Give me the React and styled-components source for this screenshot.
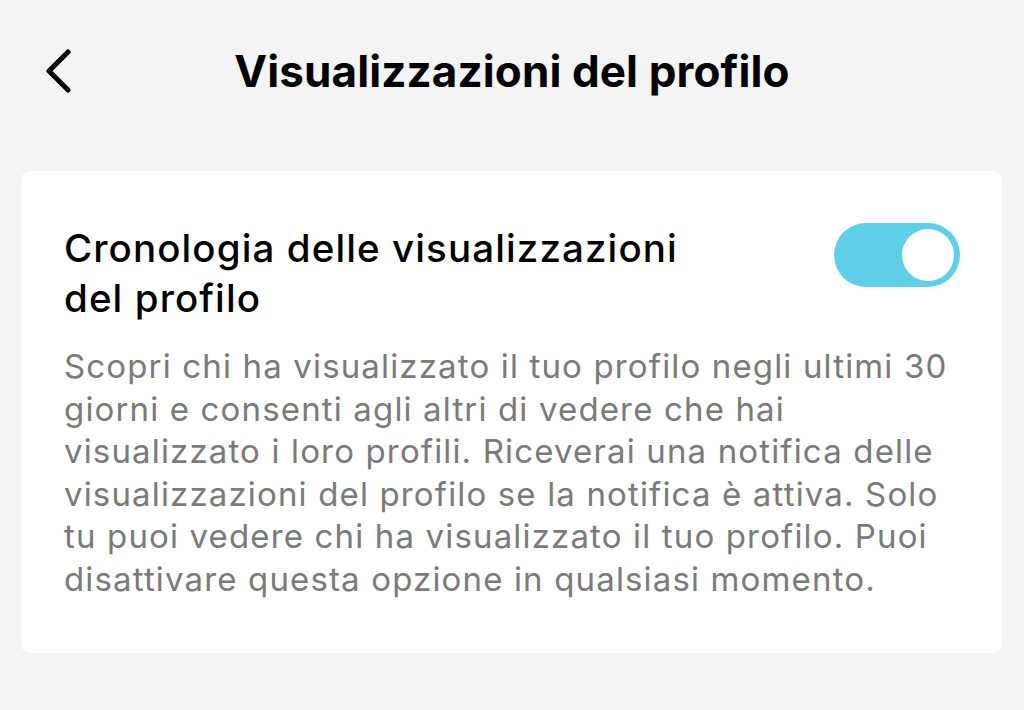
import React from "react";
import styled, { createGlobalStyle } from "styled-components";

const GlobalStyle = createGlobalStyle`
  html, body {
    margin: 0;
    padding: 0;
    background: #f4f4f4;
    font-family: Inter, "Noto Sans", sans-serif;
    -webkit-font-smoothing: antialiased;
  }
`;

function App() {
  return (
    <Page>
      <GlobalStyle />
      <Header>
        <BackButton aria-label="Indietro">
          <svg width="30" height="44" viewBox="0 0 30 44" fill="none">
            <path
              d="M25 3 L6 22 L25 41"
              stroke="#000"
              strokeWidth="5"
              strokeLinecap="round"
              strokeLinejoin="round"
            />
          </svg>
        </BackButton>
        <Title>Visualizzazioni del profilo</Title>
      </Header>
      <Card>
        <SettingRow>
          <SettingTitle>
            Cronologia delle visualizzazioni
            <br />
            del profilo
          </SettingTitle>
          <Toggle $on>
            <Knob />
          </Toggle>
        </SettingRow>
        <Description>
          Scopri chi ha visualizzato il tuo profilo negli ultimi 30
          <br />
          giorni e consenti agli altri di vedere che hai
          <br />
          visualizzato i loro profili. Riceverai una notifica delle
          <br />
          visualizzazioni del profilo se la notifica è attiva. Solo
          <br />
          tu puoi vedere chi ha visualizzato il tuo profilo. Puoi
          <br />
          disattivare questa opzione in qualsiasi momento.
        </Description>
      </Card>
    </Page>
  );
}

export default App;

const Page = styled.div`
  width: 1024px;
  height: 710px;
  overflow: hidden;
  background: #f4f4f4;
`;

const Header = styled.div`
  position: relative;
  height: 142px;
  display: flex;
  align-items: center;
  justify-content: center;
`;

const BackButton = styled.button`
  position: absolute;
  left: 43px;
  top: 49px;
  background: none;
  border: none;
  padding: 0;
  display: flex;
`;

const Title = styled.h1`
  margin: 0;
  font-size: 44px;
  font-weight: 700;
  color: #000;
  letter-spacing: 0.1px;
`;

const Card = styled.div`
  margin: 29px 22px 0 21px;
  height: 482px;
  background: #fff;
  border-radius: 9px;
  padding: 52px 42px 0 43px;
  box-sizing: border-box;
`;

const SettingRow = styled.div`
  display: flex;
  justify-content: space-between;
  align-items: flex-start;
`;

const SettingTitle = styled.div`
  font-size: 38.5px;
  font-weight: 500;
  line-height: 50px;
  color: #000;
  letter-spacing: 1.1px;
`;

const Toggle = styled.div`
  width: 126px;
  height: 64px;
  border-radius: 32px;
  background: ${(p) => (p.$on ? "#5fcfe8" : "#ddd")};
  display: flex;
  align-items: center;
  justify-content: ${(p) => (p.$on ? "flex-end" : "flex-start")};
  padding: 0 6px;
  box-sizing: border-box;
`;

const Knob = styled.div`
  width: 52px;
  height: 52px;
  border-radius: 50%;
  background: #fff;
`;

const Description = styled.p`
  margin: 22px 0 0;
  font-size: 33px;
  line-height: 42.5px;
  color: #7a7a7a;
  letter-spacing: 1.15px;
  white-space: nowrap;
`;
